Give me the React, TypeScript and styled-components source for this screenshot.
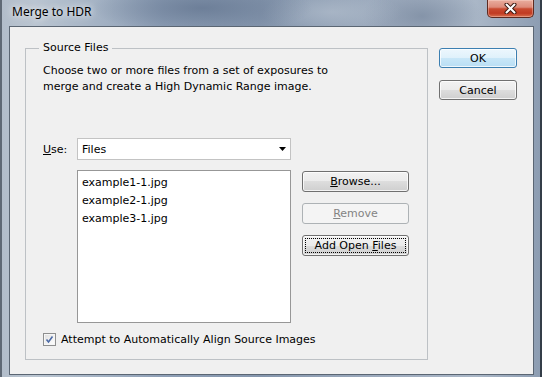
import React from 'react';
import styled, { createGlobalStyle } from 'styled-components';

const GlobalStyle = createGlobalStyle`
    html, body {
        margin: 0;
        padding: 0;
        background: #2b333d;
    }
    body {
        font-family: "DejaVu Sans", Tahoma, sans-serif;
        font-size: 11px;
        color: #000;
    }
`;

const Window = styled.div`
    width: 542px;
    height: 377px;
    box-sizing: border-box;
    display: flex;
    flex-direction: column;
    overflow: hidden;
    border-left: 2px solid #5f6975;
    border-right: 2px solid #343d48;
    background:
        radial-gradient(ellipse 110px 26px at 200px 8px, rgba(104, 122, 148, 0.85), rgba(104, 122, 148, 0)),
        radial-gradient(ellipse 70px 20px at 330px 12px, rgba(180, 192, 206, 0.6), rgba(180, 192, 206, 0)),
        radial-gradient(ellipse 60px 30px at 420px 16px, rgba(120, 136, 158, 0.7), rgba(120, 136, 158, 0)),
        linear-gradient(90deg, #b2bdca 0%, #bac5d1 6%, #a7b5c6 16%, #8e9fb6 30%, #8596ad 48%, #95a4b8 62%, #a2afc1 76%, #aab7c7 88%, #8d9db2 100%);
`;

const TitleBar = styled.div`
    height: 26px;
    flex: none;
    display: flex;
    align-items: flex-start;
`;

const Title = styled.div`
    margin: 4px 0 0 10px;
    font-family: "Noto Sans", "Open Sans", sans-serif;
    font-size: 12px;
    line-height: 16px;
    color: #000;
    text-shadow: 0 0 6px rgba(255, 255, 255, 0.9), 0 0 12px rgba(255, 255, 255, 0.6);
`;

const CloseButton = styled.div`
    width: 47px;
    height: 18px;
    box-sizing: border-box;
    margin: 0 6px 0 auto;
    display: flex;
    align-items: center;
    justify-content: center;
    border: 1px solid #5e2a20;
    border-top: none;
    border-radius: 0 0 5px 5px;
    background: linear-gradient(#e9ad9e 0%, #dd8b7a 42%, #c84a30 52%, #c13b22 78%, #d8704f 100%);
    box-shadow: inset 0 0 0 1px rgba(255, 230, 220, 0.35);
`;

const Client = styled.div`
    flex: 1;
    margin: 0 6px 2px 7px;
    border: 1px solid #5b6673;
    background: #f0f0f0;
    display: flex;
    align-items: flex-start;
    padding: 21px 0 0 15px;
`;

const Group = styled.div`
    position: relative;
    box-sizing: border-box;
    width: 403px;
    height: 312px;
    border: 1px solid #bdc1c5;
    padding: 14px 0 0 17px;
    display: flex;
    flex-direction: column;
`;

const Legend = styled.div`
    position: absolute;
    top: -9px;
    left: 13px;
    padding: 0 4px;
    line-height: 16px;
    background: #f0f0f0;
`;

const Description = styled.p`
    margin: 0;
    line-height: 16px;
`;

const UseRow = styled.div`
    margin-top: 43px;
    height: 22px;
    display: flex;
    align-items: center;
`;

const UseLabel = styled.label`
    width: 34px;
`;

const Key = styled.span`
    text-decoration: underline;
    text-underline-offset: 1px;
`;

const Select = styled.div`
    box-sizing: border-box;
    width: 214px;
    height: 22px;
    border: 1px solid #c3c3c3;
    background: #fff;
    display: flex;
    align-items: center;
    justify-content: space-between;
    padding: 0 4px 0 4px;
`;

const ListRow = styled.div`
    margin-top: 10px;
    padding-left: 34px;
    display: flex;
    gap: 11px;
`;

const FileList = styled.div`
    box-sizing: border-box;
    width: 214px;
    height: 153px;
    border: 1px solid #979797;
    background: #fff;
    padding: 3px 4px;
`;

const FileItem = styled.div`
    line-height: 18px;
`;

const ButtonColumn = styled.div`
    margin-top: 1px;
    display: flex;
    flex-direction: column;
    gap: 11px;
`;

const Button = styled.button<{ $primary?: boolean; $focused?: boolean; $width: number; $height: number }>`
    box-sizing: border-box;
    width: ${(p) => p.$width}px;
    height: ${(p) => p.$height}px;
    padding: 0;
    font-family: "DejaVu Sans", Tahoma, sans-serif;
    font-size: 11px;
    color: #000;
    border-radius: 3px;
    border: 1px solid ${(p) => (p.$primary ? '#3c7fb1' : '#707070')};
    background: ${(p) =>
        p.$primary
            ? 'linear-gradient(#edf7fd 0%, #dff1fb 50%, #c9e7f8 50%, #b9def4 100%)'
            : 'linear-gradient(#f2f2f2 0%, #ebebeb 50%, #dddddd 50%, #cfcfcf 100%)'};
    box-shadow: inset 0 0 0 1px rgba(255, 255, 255, 0.75);
    outline: ${(p) => (p.$focused ? '1px dotted #000' : 'none')};
    outline-offset: -4px;

    &:disabled {
        border-color: #adb2b5;
        background: #f4f4f4;
        color: #838383;
        box-shadow: none;
    }
`;

const CheckRow = styled.div`
    margin-top: 10px;
    height: 13px;
    display: flex;
    align-items: center;
    gap: 5px;
`;

const CheckBox = styled.div`
    box-sizing: border-box;
    width: 13px;
    height: 13px;
    border: 1px solid #8e8f8f;
    background: linear-gradient(135deg, #dcdcdc 0%, #f4f4f4 60%, #ffffff 100%);
    box-shadow: inset 0 0 0 1px #f6f6f6;
    display: flex;
    align-items: center;
    justify-content: center;
`;

const SideButtons = styled.div`
    margin-left: 11px;
    display: flex;
    flex-direction: column;
    gap: 12px;
`;

const files = ['example1-1.jpg', 'example2-1.jpg', 'example3-1.jpg'];

const App: React.FC = () => {
    return (
        <>
            <GlobalStyle />
            <Window>
                <TitleBar>
                    <Title>Merge to HDR</Title>
                    <CloseButton>
                        <svg width="13" height="11" viewBox="0 0 13 11">
                            <path d="M2.5 1.5 L10.5 9.5 M10.5 1.5 L2.5 9.5" stroke="#3b1810" strokeWidth="4" strokeLinecap="round" />
                            <path d="M2.5 1.5 L10.5 9.5 M10.5 1.5 L2.5 9.5" stroke="#ffffff" strokeWidth="2" strokeLinecap="round" />
                        </svg>
                    </CloseButton>
                </TitleBar>
                <Client>
                    <Group>
                        <Legend>Source Files</Legend>
                        <Description>
                            Choose two or more files from a set of exposures to
                            <br />
                            merge and create a High Dynamic Range image.
                        </Description>
                        <UseRow>
                            <UseLabel>
                                <Key>U</Key>se:
                            </UseLabel>
                            <Select>
                                <span>Files</span>
                                <svg width="7" height="4" viewBox="0 0 7 4">
                                    <polygon points="0,0 7,0 3.5,4" fill="#000" />
                                </svg>
                            </Select>
                        </UseRow>
                        <ListRow>
                            <FileList>
                                {files.map((f) => (
                                    <FileItem key={f}>{f}</FileItem>
                                ))}
                            </FileList>
                            <ButtonColumn>
                                <Button $width={107} $height={21}>
                                    <Key>B</Key>rowse...
                                </Button>
                                <Button $width={107} $height={21} disabled>
                                    <Key>R</Key>emove
                                </Button>
                                <Button $width={107} $height={21} $focused>
                                    Add Open <Key>F</Key>iles
                                </Button>
                            </ButtonColumn>
                        </ListRow>
                        <CheckRow>
                            <CheckBox>
                                <svg width="9" height="9" viewBox="0 0 9 9">
                                    <polyline points="1.5,4.5 3.5,7 7.5,1.5" fill="none" stroke="#4c6aa6" strokeWidth="1.6" />
                                </svg>
                            </CheckBox>
                            <span>Attempt to Automatically Align Source Images</span>
                        </CheckRow>
                    </Group>
                    <SideButtons>
                        <Button $width={78} $height={20} $primary>
                            OK
                        </Button>
                        <Button $width={78} $height={20}>
                            Cancel
                        </Button>
                    </SideButtons>
                </Client>
            </Window>
        </>
    );
};

export default App;
